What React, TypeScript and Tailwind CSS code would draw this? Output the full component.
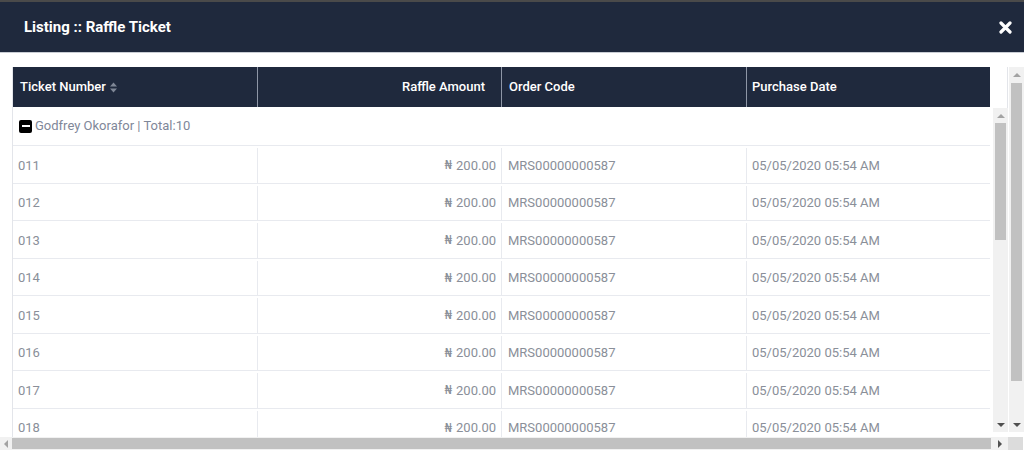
import React from "react";

const rows = ["011", "012", "013", "014", "015", "016", "017", "018"];

const Tri: React.FC<{ dir: "up" | "down" | "left" | "right"; color?: string }> = ({ dir, color = "#a3a3a3" }) => {
  const pts = {
    up: "0,5 4,1 8,5",
    down: "0,1 8,1 4,5",
    left: "5,0 5,8 1,4",
    right: "1,0 1,8 5,4",
  }[dir];
  const w = dir === "left" || dir === "right" ? 6 : 8;
  const h = dir === "left" || dir === "right" ? 8 : 6;
  return (
    <svg width={w} height={h} viewBox={`0 0 ${w} ${h}`}>
      <polygon points={pts} fill={color} />
    </svg>
  );
};

const App: React.FC = () => {
  return (
    <div
      className="w-[1024px] h-[473px] bg-white flex flex-col overflow-hidden"
      style={{ fontFamily: "Roboto, 'Liberation Sans', sans-serif" }}
    >
      <div className="h-[2px] bg-[#4a4a4a]" />
      <div className="h-[50px] bg-[#1f293d] flex items-center justify-between pl-6 pr-[12px]">
        <div className="text-white font-bold text-[15px]">Listing :: Raffle Ticket</div>
        <svg width="13" height="13" viewBox="0 0 13 13">
          <path d="M2 2 L11 11 M11 2 L2 11" stroke="white" strokeWidth="3.2" strokeLinecap="round" />
        </svg>
      </div>
      <div className="h-[1px] bg-[#c9cdd4]" />

      <div className="flex pt-[14px] pl-[12px] h-[384px]">
        <div className="w-[978px] h-[370px] overflow-hidden border-l border-[#e3e5ea] text-[13px] text-[#8a8f99]">
          <div className="grid grid-cols-[245px_244px_245px_243px] h-[40px] bg-[#1f293d] text-white text-[13px] font-medium">
            <div className="flex items-center pl-[7px] gap-1 border-r border-[#8e96a6]">
              Ticket Number
              <svg width="7" height="11" viewBox="0 0 7 11">
                <polygon points="0,4.5 3.5,0.5 7,4.5" fill="#7f8796" />
                <polygon points="0,6.5 7,6.5 3.5,10.5" fill="#7f8796" />
              </svg>
            </div>
            <div className="flex items-center justify-end pr-[16px] border-r border-[#8e96a6]">Raffle Amount</div>
            <div className="flex items-center pl-[7px] border-r border-[#8e96a6]">Order Code</div>
            <div className="flex items-center pl-[5px]">Purchase Date</div>
          </div>
          <div className="h-[39px] flex items-center pl-[6px] gap-[3px] border-b border-[#e8eaef] text-[#7f8799]">
            <div className="w-[13px] h-[13px] bg-black rounded-[2px] flex items-center justify-center">
              <div className="w-[8px] h-[2px] bg-white" />
            </div>
            Godfrey Okorafor | Total:10
          </div>
          {rows.map((r) => (
            <div
              key={r}
              className="grid grid-cols-[245px_244px_245px_243px] h-[37.5px] pt-[2px] border-b border-[#e8eaef]"
            >
              <div className="flex items-center pl-[5px] border-r border-[#e8eaef]">{r}</div>
              <div className="flex items-center justify-end pr-[5px] border-r border-[#e8eaef]">
                <span style={{ fontFamily: "'DejaVu Sans', sans-serif" }} className="text-[12px] mr-[4px]">₦</span>
                200.00
              </div>
              <div className="flex items-center pl-[6px] border-r border-[#e8eaef]">MRS00000000587</div>
              <div className="flex items-center pl-[5px]">05/05/2020 05:54 AM</div>
            </div>
          ))}
        </div>

        <div className="w-[18px] flex flex-col">
          <div className="h-[41px] border-r border-[#e3e5ea]" />
          <div className="ml-[3px] w-[15px] h-[324px] bg-[#f1f1f1] flex flex-col items-center">
            <div className="h-[15px] flex items-center justify-center"><Tri dir="up" /></div>
            <div className="w-[11px] h-[117px] bg-[#c1c1c1]" />
            <div className="flex-1" />
            <div className="h-[15px] flex items-center justify-center"><Tri dir="down" color="#505050" /></div>
          </div>
        </div>

        <div className="ml-[1px] w-[15px] h-[365px] bg-[#f1f1f1] flex flex-col items-center">
          <div className="h-[16px] flex items-center justify-center"><Tri dir="up" /></div>
          <div className="w-[11px] h-[298px] bg-[#c1c1c1]" />
          <div className="flex-1" />
          <div className="h-[15px] flex items-center justify-center"><Tri dir="down" color="#505050" /></div>
        </div>
      </div>

      <div className="flex h-[13px]">
        <div className="w-[1008px] bg-[#f1f1f1] flex items-center">
          <div className="w-[12px] flex justify-center"><Tri dir="left" /></div>
          <div className="w-[979px] h-[11px] bg-[#c1c1c1]" />
          <div className="flex-1 flex justify-center"><Tri dir="right" color="#505050" /></div>
        </div>
        <div className="w-[15px] bg-[#dcdcdc]" />
      </div>
    </div>
  );
};

export default App;
